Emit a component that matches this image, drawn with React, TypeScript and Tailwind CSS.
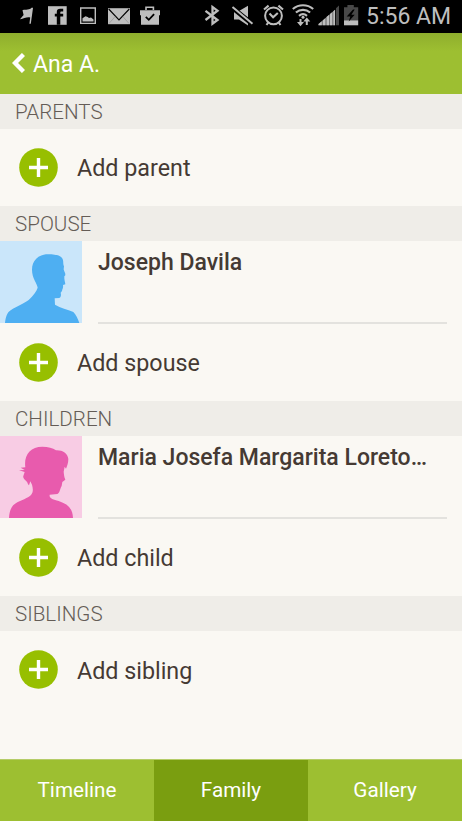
import React from "react";

interface Person {
  name: string;
  gender: "male" | "female";
}

interface FamilySection {
  title: string;
  addLabel: string;
  person?: Person;
}

const SECTIONS: FamilySection[] = [
  { title: "PARENTS", addLabel: "Add parent" },
  {
    title: "SPOUSE",
    addLabel: "Add spouse",
    person: { name: "Joseph Davila", gender: "male" },
  },
  {
    title: "CHILDREN",
    addLabel: "Add child",
    person: { name: "Maria Josefa Margarita Loreto…", gender: "female" },
  },
  { title: "SIBLINGS", addLabel: "Add sibling" },
];

const TABS = ["Timeline", "Family", "Gallery"];

function StatusBar(): React.JSX.Element {
  return (
    <div className="h-[33px] shrink-0 bg-black flex items-center justify-between text-[#bebebe]">
      {/* Notifications */}
      <svg viewBox="0 0 170 33" className="w-[170px] h-[33px]" fill="currentColor">
        <path d="M22.5 10.3 C25 8.8 28 11.2 32 7.6 L33 8 L30.8 23.8 L29.4 23.8 L30.2 17.6 C27 16.7 24 18.6 20 19.3 L23.6 15 Z" />
        <path d="M48 6.2h18.7v18.6H48z" />
        <path d="M56.8 24.8v-8.2h-2v-2.9h2v-1.6c0-2.2 1.2-3.3 3.4-3.3h3v2.7h-1.6c-1 0-1.3.4-1.3 1.2v1h2.9v2.9h-2.9v8.2z" fill="#000" />
        <path fillRule="evenodd" d="M80 7.3h16v16.8H80z M81.4 8.7v14h13.2v-14z" />
        <path d="M82.5 21.5v-3.3l3-2 2.2.7 1.3 1.2 2-.7 2.5 2.2v1.9z" />
        <path d="M108 8.2h22v16h-22z" />
        <path d="M108.7 9l10.3 11 10.3-11" fill="none" stroke="#000" strokeWidth="1.1" />
        <path d="M109 23.5l6-6.8M129 23.5l-6-6.8" fill="none" stroke="#8d8d8d" strokeWidth=".6" />
        <path d="M146 10V7.2h7.4V10" fill="none" stroke="currentColor" strokeWidth="1.6" />
        <path d="M140 10.3h20v5h-1v9.4h-18v-9.4h-1z" />
        <path d="M145.8 16.8l3 3 5.3-5.7" fill="none" stroke="#000" strokeWidth="1.8" />
      </svg>

      <div className="flex items-center pr-[11px]">
        {/* System state */}
        <svg viewBox="200 0 160 33" className="w-[160px] h-[33px]" fill="currentColor">
          <path d="M205.5 10.8l12 9.2-5 3.7V7l5 3.7-12 9.3" fill="none" stroke="currentColor" strokeWidth="2.3" />
          <path d="M234 11h5l9-5.3v19.8l-9-6h-5z" />
          <path d="M231.5 7l21 17.2" stroke="#000" strokeWidth="4.8" />
          <path d="M232.5 7l20 16.8" stroke="currentColor" strokeWidth="2" />
          <circle cx="273.5" cy="15.8" r="8.4" fill="none" stroke="currentColor" strokeWidth="2" />
          <path d="M269.5 13.5l3.6 3.7 4.7-4.3M264 9.5l4.6-3.9M283 9.5l-4.6-3.9M268.3 22.5l-1.8 2.5M278.7 22.5l1.8 2.5" fill="none" stroke="currentColor" strokeWidth="2.1" />
          <path d="M292.8 9c6-5 14.4-5 20.4 0M295.9 12.5c4.2-3.6 10-3.6 14.2 0M299 15.8c2.5-2 5.5-2 8 0" fill="none" stroke="currentColor" strokeWidth="2.2" />
          <circle cx="303" cy="17.3" r="1.5" />
          <path d="M300.5 19v4.3M306.8 25v-4.5" stroke="currentColor" strokeWidth="2" />
          <path d="M297 22h7l-3.5 4.2zM303.3 21.5h7l-3.5-4z" />
          <path d="M318.5 25.3v-1.3L335 9.7v15.6z" fill="#606060" />
          <path d="M318.5 25.3v-1.3l3.3-2.8v4.1zM322.7 25.3v-4.9l2.8-2.3v7.2zM326.5 25.3v-8.2l2.7-2.3v10.5zM330 25.3v-11.2l2.4-2v13.2zM333.3 25.3V11.2l1.8-1.5v15.6z" />
          <path d="M336 25.3V8.2l3-2.8v19.9z" fill="#484848" />
          <path d="M344 7.2h3.4V5h6.4v2.2h4.4v13H344z" fill="#484848" />
          <path d="M344 20.3h14.2v5H344z" />
          <path d="M353 9.5l-6.3 7h3.6l-1.6 5 6-6.8h-3.3l3.3-5.2z" fill="#000" />
        </svg>
        <span className="pl-[6px] w-[91px] text-[23px] leading-[31px] pb-px whitespace-nowrap">5:56 AM</span>
      </div>
    </div>
  );
}

function Avatar({ gender }: { gender: Person["gender"] }): React.JSX.Element {
  if (gender === "male") {
    return (
      <svg viewBox="0 0 246 246" className="w-[82px] h-[82px] shrink-0 bg-[#cae6fa]" fill="#4eaff2">
        <path d="M15 246 C17 228 21 215 32 208 C50 195 72 188 86 177 C100 163 110 151 113 140 C112 128 96 112 96 86 C96 60 114 40 144 40 C165 40 180 43 186 51 C192 59 188 68 192 76 L191 85 C192 91 197 96 196 103 L193 106 C192 117 196 124 196 130 L189 132 C191 141 186 145 186 150 L182 155 C184 162 183 169 178 171 L164 172 L165 191 C182 202 202 205 220 213 C228 220 234 235 238 246 Z" />
      </svg>
    );
  }
  return (
    <svg viewBox="0 0 246 246" className="w-[82px] h-[82px] shrink-0 bg-[#f8cce4]" fill="#e85bad">
      <path d="M27 246 C28 222 36 207 52 199 C69 190 93 183 97 170 C100 162 98 153 96 146 L91 136 L87 148 C82 144 83 138 79 136 C73 130 68 125 70 120 L74 108 L57 103 L74 102 L62 95 L76 94 C71 59 90 32 127 32 C145 32 158 36 168 43 C187 42 203 51 205 69 C205 82 201 91 198 98 L194 92 L191 107 C192 115 192 121 196 131 L187 138 L185 150 C180 158 179 172 172 174 L149 176 C147 188 160 190 176 195 C203 204 218 217 219 246 Z" />
    </svg>
  );
}

function PersonRow({ person }: { person: Person }): React.JSX.Element {
  return (
    <div className="flex h-[82.5px]">
      <Avatar gender={person.gender} />
      <div className="ml-4 mr-[15px] flex-1 min-w-0 border-b-2 border-[#e3e2de]">
        <p className="pt-[5.5px] text-[23px] leading-8 font-medium whitespace-nowrap text-[#453a33]">
          {person.name}
        </p>
      </div>
    </div>
  );
}

function AddRow({ label }: { label: string }): React.JSX.Element {
  return (
    <button className="flex w-full h-[77px] items-center pl-[19px] text-left">
      <svg viewBox="0 0 39 39" className="w-[39px] h-[39px]">
        <circle cx="19.5" cy="19.5" r="19.3" fill="#97bf00" />
        <path d="M19.5 10v19M10 19.5h19" stroke="#fff" strokeWidth="3.4" />
      </svg>
      <span className="ml-[19px] pt-[2px] text-[23.3px] leading-8 text-[#453a33]">{label}</span>
    </button>
  );
}

export default function App(): React.JSX.Element {
  return (
    <div className="w-[462px] h-[821px] flex flex-col overflow-hidden bg-[#faf8f3] font-[Roboto,sans-serif]">
      <StatusBar />

      {/* Header */}
      <header className="h-[60.5px] shrink-0 flex items-center pl-[12px] bg-linear-to-b from-[#8fae2d] via-[#9dbf31] via-30% to-[#9dbf31] text-white">
        <svg viewBox="0 0 13 20" className="w-[13px] h-5" fill="none" stroke="currentColor" strokeWidth="4.4">
          <path d="M11.5 1.5L3 10l8.5 8.5" />
        </svg>
        <h1 className="ml-[8px] pt-[3px] text-[23px] leading-8">Ana A.</h1>
      </header>

      <main className="flex-1 min-h-0">
        {SECTIONS.map((section) => (
          <section key={section.title}>
            <h2 className="h-[35.4px] pl-[15px] bg-[#efede8] text-[20.6px] leading-[37px] font-light text-[#645c56]">
              {section.title}
            </h2>
            {section.person && <PersonRow person={section.person} />}
            <AddRow label={section.addLabel} />
          </section>
        ))}
      </main>

      {/* Bottom tabs */}
      <nav className="grid grid-cols-3 h-[62px] shrink-0 border-t border-[#b5cc68] text-[20.7px] text-white">
        {TABS.map((tab) => (
          <button key={tab} className={tab === "Family" ? "pt-px bg-[#7a9e10]" : "pt-px bg-[#9dbf31]"}>
            {tab}
          </button>
        ))}
      </nav>
    </div>
  );
}
